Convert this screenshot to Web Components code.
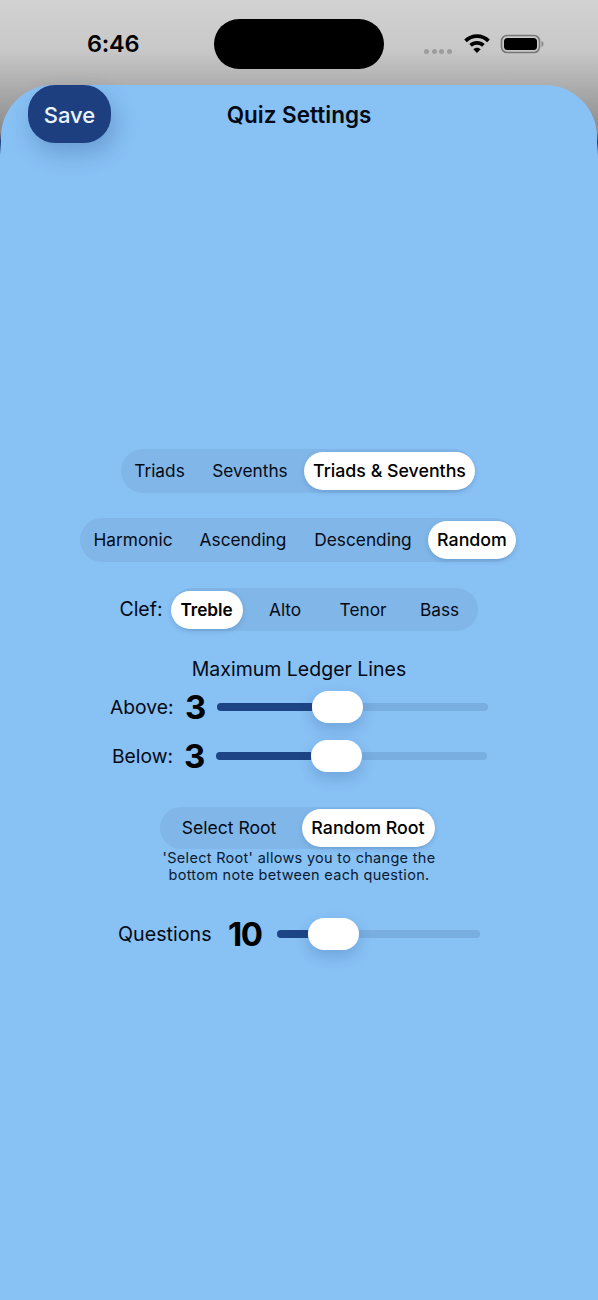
<!DOCTYPE html>
<html><head><meta charset="utf-8"><style>
html,body{margin:0;padding:0;width:598px;height:1300px;overflow:hidden;background:#88c1f4}
body{font-family:Inter,"Liberation Sans",sans-serif;color:#050a14}
</style></head><body>
<quiz-app>
  <status-bar slot="status"></status-bar>
  <settings-sheet slot="sheet"></settings-sheet>
</quiz-app>
<script>
const def=(name,css,html)=>customElements.define(name,class extends HTMLElement{
  constructor(){super();this.attachShadow({mode:'open'}).innerHTML=`<style>${css}</style>${html}`;}
});
def('quiz-app',`:host{display:block;position:relative;width:598px;height:1300px;background:linear-gradient(#d2d2d2 0,#c8c8c8 50px,#aeaeae 85px,#8b8b8b 132px,#1d3f7f 142px,#88c1f4 155px);overflow:hidden}`,`<slot name="status"></slot><slot name="sheet"></slot>`);
def('status-bar',`:host{display:block;height:85px;position:relative}
.t{position:absolute;left:87px;top:29px;font:600 23.5px/30px Inter,"Liberation Sans",sans-serif;color:#000;letter-spacing:-.2px}
.i{position:absolute;left:214px;top:19px;width:170px;height:50px;border-radius:25px;background:#000}
.d{position:absolute;left:424px;top:48.5px;display:flex;gap:2.6px}.d i{width:5px;height:5px;border-radius:50%;background:#9c9c9c}
svg{position:absolute}`,
`<span class="t">6:46</span><div class="i"></div><div class="d"><i></i><i></i><i></i><i></i></div>
<svg style="left:463px;top:33px" width="28" height="21" viewBox="0 0 28 21"><path d="M14 1.2C9 1.2 4.6 3.2 1.2 6.5l2.6 2.7C6.5 6.6 10 5 14 5s7.5 1.6 10.2 4.2l2.6-2.7C23.4 3.2 19 1.2 14 1.2zM14 8c-3 0-5.700 1.200-7.700 3.100l2.600 2.700C10.200 12.500 12 11.700 14 11.700s3.800.8 5.100 2.100l2.600-2.700C19.700 9.200 17 8 14 8zM14 14.700c-1.500 0-2.800.6-3.700 1.500L14 20l3.700-3.800c-.9-.9-2.200-1.500-3.700-1.500z" fill="#000"/></svg>
<svg style="left:500px;top:34px" width="44" height="20" viewBox="0 0 44 20"><rect x="1.500" y="1.500" width="38" height="17" rx="5.500" fill="none" stroke="#777" stroke-width="1.600"/><rect x="4" y="4" width="33" height="12" rx="3.500" fill="#000"/><path d="M41.500 7v6c1.200-.4 2-1.600 2-3s-.8-2.600-2-3z" fill="#888"/></svg>`);
def('settings-sheet',`:host{display:flex;flex-direction:column;align-items:center;position:relative;height:1215px;margin:0 1px;background:#88c1f4;border-radius:52px 52px 0 0;box-sizing:border-box;padding-top:364px}
.save{position:absolute;left:27px;top:0;width:83px;height:58px;border-radius:27px;background:#1d3f7f;color:#eaf4ff;font:500 22px/60px Inter,"Liberation Sans",sans-serif;text-align:center;box-shadow:4px 10px 22px rgba(29,63,127,.28)}
.title{position:absolute;left:0;right:0;top:14px;text-align:center;font:600 22.5px/32px Inter,"Liberation Sans",sans-serif;color:#050a14}`,
`<div class="save">Save</div><div class="title">Quiz Settings</div><slot></slot>`);
def('seg-control',`:host{display:flex;align-items:center;border-radius:22px;background:#81b6e8;font:430 17.3px/22px Inter,"Liberation Sans",sans-serif;color:#050a14}`,`<slot></slot>`);
def('seg-item',`:host{display:flex;align-items:center;justify-content:center;box-sizing:border-box;height:38px;border-radius:19px;white-space:nowrap}
:host([on]){background:#fff;box-shadow:0 2px 5px rgba(40,80,130,.22);color:#000;font-weight:450;font-size:17.8px}`,`<slot></slot>`);
def('ledger-slider',`:host{display:block;position:relative;height:8px;border-radius:4px;background:#78aee0}
.f{height:8px;border-radius:4px 0 0 4px;background:#1d4585;width:var(--fill)}
.k{position:absolute;left:var(--fill);top:-12px;width:51px;height:32px;border-radius:16px;background:#fff;box-shadow:0 6px 14px rgba(30,70,130,.22)}`,
`<div class="f"></div><div class="k"></div>`);
def('value-row',`:host{display:flex;align-items:center;font:400 19.3px/32px Inter,"Liberation Sans",sans-serif;color:#050a14;height:32px}
::slotted(b){font:700 33px/32px Inter,"Liberation Sans",sans-serif;color:#000}`,`<slot></slot>`);
document.querySelector('settings-sheet').innerHTML=`
<seg-control style="width:354px;height:44px;margin-left:-2px">
  <seg-item style="width:77px">Triads</seg-item><seg-item style="width:104px;margin-right:2px">Sevenths</seg-item><seg-item on style="width:171px">Triads &amp; Sevenths</seg-item>
</seg-control>
<seg-control style="width:436px;height:44px;margin:25px 0 0 -2px">
  <seg-item style="width:106px">Harmonic</seg-item><seg-item style="width:114px">Ascending</seg-item><seg-item style="width:126px;margin-right:2px">Descending</seg-item><seg-item on style="width:88px">Random</seg-item>
</seg-control>
<div style="display:flex;align-items:center;gap:8px;margin:26px 0 0 -1px;font:400 19.5px/43px Inter,'Liberation Sans',sans-serif;color:#050a14">
  <span>Clef:</span>
  <seg-control style="width:307px;height:43px">
    <seg-item on style="width:72px;font-weight:600;font-size:17.2px">Treble</seg-item><seg-item style="width:85px">Alto</seg-item><seg-item style="width:71px">Tenor</seg-item><seg-item style="width:79px;padding-left:3px">Bass</seg-item>
  </seg-control>
</div>
<div style="margin-top:24px;font:400 19.5px/28px Inter,'Liberation Sans',sans-serif;color:#050a14">Maximum Ledger Lines</div>
<value-row style="margin-top:8px">
  <span style="width:75px">Above:</span><b style="width:32px">3</b><ledger-slider style="width:271px;--fill:95px"></ledger-slider>
</value-row>
<value-row style="margin-top:17px">
  <span style="width:73px;padding-left:1px;box-sizing:border-box">Below:</span><b style="width:32px">3</b><ledger-slider style="width:271px;--fill:95px"></ledger-slider>
</value-row>
<seg-control style="width:275px;height:42px;margin:35px 0 0 -4px">
  <seg-item style="width:139px;margin-right:3px;font-size:17.6px">Select Root</seg-item><seg-item on style="width:133px">Random Root</seg-item>
</seg-control>
<div style="margin-top:0;font:400 14.5px/17px Inter,'Liberation Sans',sans-serif;text-align:center;color:#0a1a33;letter-spacing:.3px">'Select Root' allows you to change the<br>bottom note between each question.</div>
<value-row style="margin-top:35px">
  <span style="width:110px;font-size:19.7px">Questions</span><b style="width:49px;letter-spacing:-1.5px">10</b><ledger-slider style="width:203px;--fill:31px"></ledger-slider>
</value-row>`;
</script>
</body></html>
